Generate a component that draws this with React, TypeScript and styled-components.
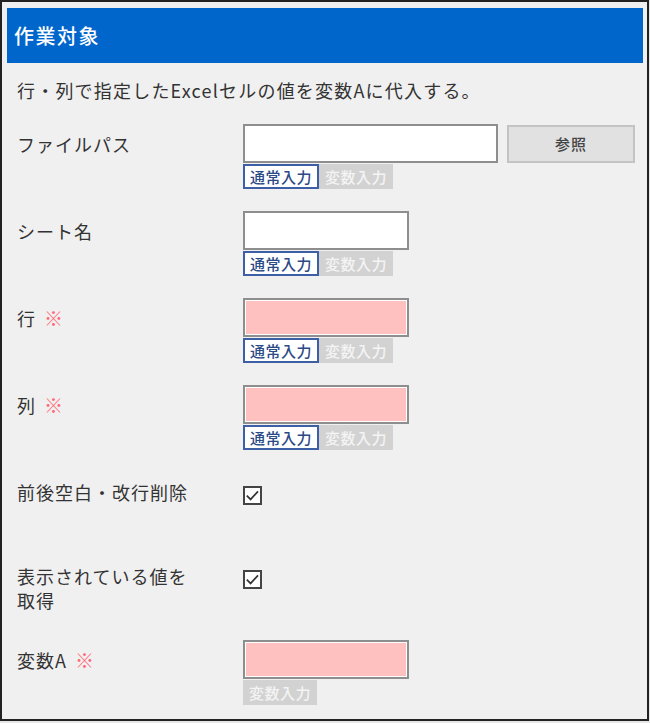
import React from "react";
import styled, { createGlobalStyle } from "styled-components";

const GlobalStyle = createGlobalStyle`
  html, body {
    margin: 0;
    padding: 0;
    background: #e6e6e6;
  }
  body {
    font-family: "Noto Sans CJK JP", "Noto Sans", sans-serif;
    color: #333;
  }
  * { box-sizing: border-box; }
`;

const Frame = styled.div`
  width: 649px;
  height: 721px;
  border: 2px solid #222;
  background: #f0f0f0;
  padding: 6px 4px 0 5px;
  overflow: hidden;
`;

const Header = styled.div`
  height: 55px;
  background: #0066cc;
  display: flex;
  align-items: center;
  padding-left: 7px;
`;

const Title = styled.h1`
  margin: 0;
  font-size: 20px;
  font-weight: 500;
  letter-spacing: 1.5px;
  color: #fff;
`;

const Description = styled.p`
  margin: 15px 0 0;
  padding-left: 10px;
  font-size: 18px;
  line-height: 24px;
  letter-spacing: 1.2px;
  color: #333;
`;

const Rows = styled.div`
  padding-top: 22px;
`;

const Row = styled.div<{ $minHeight?: number }>`
  display: flex;
  align-items: flex-start;
  padding-left: 10px;
  margin-bottom: 22px;
  min-height: ${(p) => (p.$minHeight ? `${p.$minHeight}px` : "auto")};
`;

const Label = styled.div`
  width: 226px;
  flex: none;
  padding-top: 8px;
  font-size: 18px;
  line-height: 24px;
  letter-spacing: 1px;
  color: #333;
`;

const Required = styled.span`
  margin-left: 8px;
  color: #ff6677;
  font-size: 19px;
`;

const Field = styled.div`
  display: flex;
  flex-direction: column;
  align-items: flex-start;
`;

const InputLine = styled.div`
  display: flex;
  align-items: center;
  gap: 9px;
`;

const TextBox = styled.div<{ $width: number; $required?: boolean }>`
  width: ${(p) => p.$width}px;
  height: 39px;
  border: 2px solid #8e8e8e;
  background: ${(p) => (p.$required ? "#ffc0c0" : "#ffffff")};
  box-shadow: ${(p) => (p.$required ? "inset 0 0 0 1px #ffffff" : "none")};
`;

const BrowseButton = styled.button`
  width: 128px;
  height: 38px;
  border: 2px solid #c3c3c3;
  background: #e1e1e1;
  font-family: inherit;
  font-size: 15px;
  font-weight: 500;
  letter-spacing: 1px;
  color: #444;
  padding: 0;
`;

const TabBar = styled.div`
  display: flex;
  margin-top: 1px;
`;

const Tab = styled.span<{ $active?: boolean }>`
  height: 25px;
  display: flex;
  align-items: center;
  justify-content: center;
  width: ${(p) => (p.$active ? 76 : 74)}px;
  font-size: 15px;
  font-weight: 500;
  letter-spacing: 0.5px;
  background: ${(p) => (p.$active ? "#ffffff" : "#d2d2d2")};
  border: ${(p) => (p.$active ? "2px solid #3d5fa6" : "none")};
  color: ${(p) => (p.$active ? "#2c4a86" : "#f4f4f4")};
`;

const CheckBox = styled.span`
  display: block;
  width: 19px;
  height: 19px;
  margin-top: 14px;
  border: 2px solid #444;
  background: #fff;
  svg {
    display: block;
  }
`;

const Check = () => (
  <CheckBox>
    <svg width="15" height="15" viewBox="0 0 15 15">
      <path d="M1.8 7.6 L5.6 11.4 L13 3.4" fill="none" stroke="#333" strokeWidth="1.7" />
    </svg>
  </CheckBox>
);

const ModeTabs = ({ normal = true }: { normal?: boolean }) => (
  <TabBar>
    {normal && <Tab $active>通常入力</Tab>}
    <Tab>変数入力</Tab>
  </TabBar>
);

export default function App() {
  return (
    <>
      <GlobalStyle />
      <Frame>
        <Header>
          <Title>作業対象</Title>
        </Header>
        <Description>行・列で指定したExcelセルの値を変数Aに代入する。</Description>
        <Rows>
          <Row>
            <Label>ファイルパス</Label>
            <Field>
              <InputLine>
                <TextBox $width={255} />
                <BrowseButton>参照</BrowseButton>
              </InputLine>
              <ModeTabs />
            </Field>
          </Row>
          <Row>
            <Label>シート名</Label>
            <Field>
              <TextBox $width={166} />
              <ModeTabs />
            </Field>
          </Row>
          <Row>
            <Label>
              行<Required>※</Required>
            </Label>
            <Field>
              <TextBox $width={166} $required />
              <ModeTabs />
            </Field>
          </Row>
          <Row>
            <Label>
              列<Required>※</Required>
            </Label>
            <Field>
              <TextBox $width={166} $required />
              <ModeTabs />
            </Field>
          </Row>
          <Row $minHeight={62}>
            <Label>前後空白・改行削除</Label>
            <Field>
              <Check />
            </Field>
          </Row>
          <Row $minHeight={62}>
            <Label>
              表示されている値を
              <br />
              取得
            </Label>
            <Field>
              <Check />
            </Field>
          </Row>
          <Row>
            <Label>
              変数A<Required>※</Required>
            </Label>
            <Field>
              <TextBox $width={166} $required />
              <ModeTabs normal={false} />
            </Field>
          </Row>
        </Rows>
      </Frame>
    </>
  );
}
